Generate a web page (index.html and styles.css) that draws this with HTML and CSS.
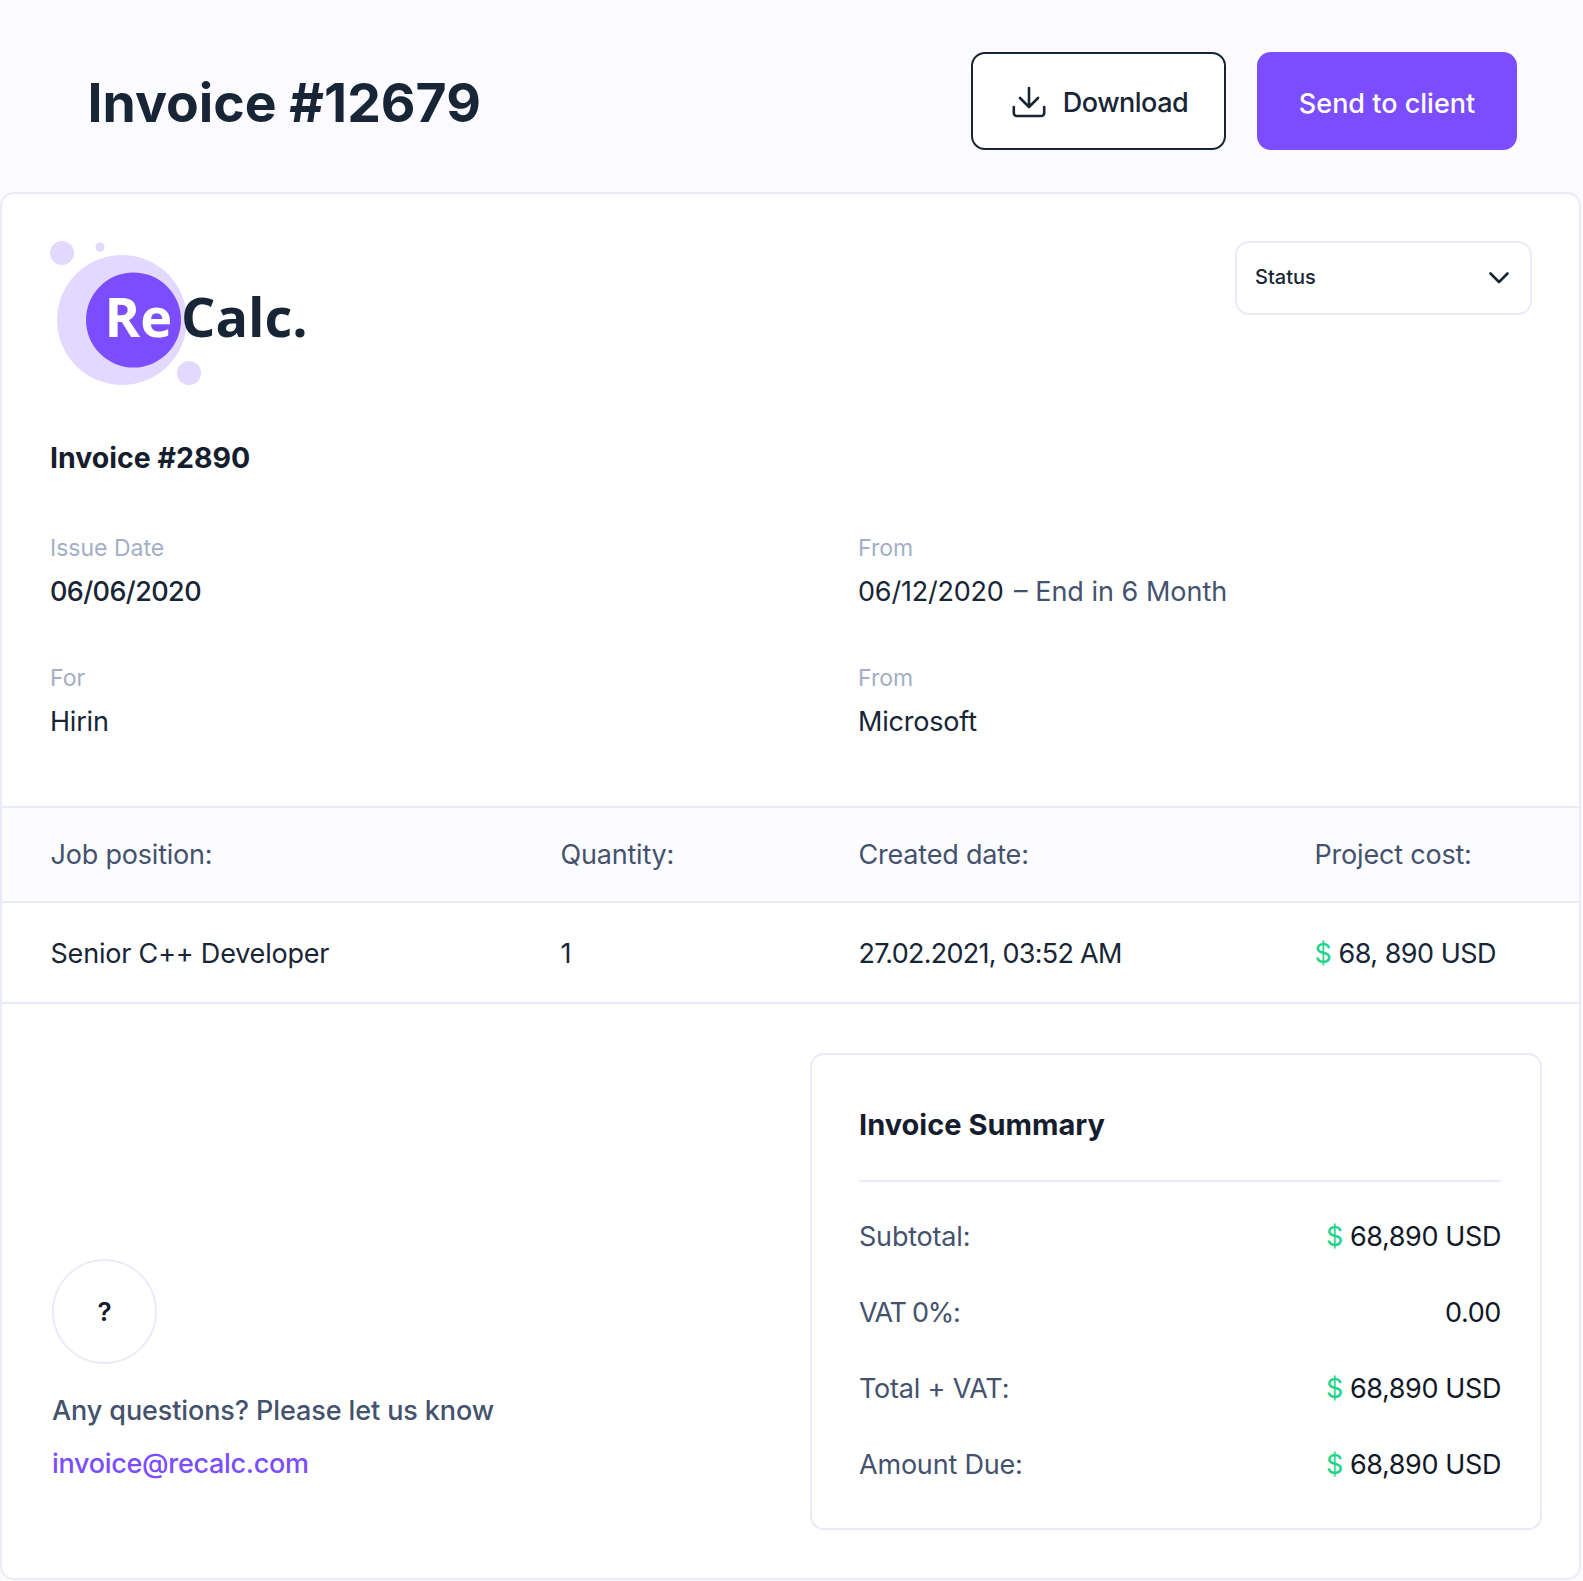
FILE: index.html
```html
<!DOCTYPE html>
<html lang="en">
<head>
    <meta charset="UTF-8">
    <title>Invoice #12679</title>
    <link rel="stylesheet" href="styles.css">
</head>
<body>

    <header class="topbar">
        <h1>Invoice #12679</h1>
        <div class="actions">
            <button class="btn btn-outline">
                <svg width="34" height="34" viewBox="0 0 34 34" fill="none" stroke="#172536" stroke-width="2.6" stroke-linecap="round" stroke-linejoin="round">
                    <path d="M17 3v19M8 13l9 9 9-9"/>
                    <path d="M1.800 22v6a3 3 0 0 0 3 3h24.400a3 3 0 0 0 3-3v-6"/>
                </svg>
                Download
            </button>
            <button class="btn btn-primary">Send to client</button>
        </div>
    </header>

    <main class="card">
        <section class="info">
            <div class="info-top">
                <svg class="logo" width="270" height="150" viewBox="50 241 270 150">
                    <circle cx="122" cy="320" r="65" fill="#e3d9ff"/>
                    <circle cx="62" cy="253" r="12" fill="#e3d9ff"/>
                    <circle cx="100" cy="247" r="4.500" fill="#e3d9ff"/>
                    <circle cx="189" cy="373" r="12" fill="#e3d9ff"/>
                    <circle cx="133.500" cy="320" r="47.500" fill="#7b4dff"/>
                    <text x="104.500" y="337" class="logo-re">Re</text>
                    <text x="181" y="337" class="logo-calc">Calc.</text>
                </svg>
                <div class="status">
                    <span>Status</span>
                    <svg width="22" height="14" viewBox="0 0 22 14" fill="none" stroke="#172536" stroke-width="2.600" stroke-linecap="round" stroke-linejoin="round">
                        <path d="M2.500 2.500L11 11l8.500-8.500"/>
                    </svg>
                </div>
            </div>

            <h2>Invoice #2890</h2>

            <div class="details">
                <div>
                    <div class="label">Issue Date</div>
                    <div class="value strong">06/06/2020</div>
                </div>
                <div>
                    <div class="label">From</div>
                    <div class="value">06/12/2020 <span class="muted">– End in 6 Month</span></div>
                </div>
                <div>
                    <div class="label">For</div>
                    <div class="value">Hirin</div>
                </div>
                <div>
                    <div class="label">From</div>
                    <div class="value">Microsoft</div>
                </div>
            </div>
        </section>

        <div class="table-row table-head">
            <div>Job position:</div>
            <div>Quantity:</div>
            <div>Created date:</div>
            <div>Project cost:</div>
        </div>
        <div class="table-row table-body">
            <div>Senior C++ Developer</div>
            <div>1</div>
            <div class="nums">27.02.2021, 03:52 AM</div>
            <div class="cost"><span class="dollar">$</span> 68, 890 USD</div>
        </div>

        <section class="bottom">
            <div class="contact">
                <div class="help-circle">?</div>
                <p class="question">Any questions? Please let us know</p>
                <a class="mail" href="#">invoice@recalc.com</a>
            </div>

            <div class="summary">
                <h3>Invoice Summary</h3>
                <div class="summary-row">
                    <span>Subtotal:</span>
                    <span class="amount"><span class="dollar">$</span> 68,890 USD</span>
                </div>
                <div class="summary-row">
                    <span class="nums">VAT 0%:</span>
                    <span class="amount">0.00</span>
                </div>
                <div class="summary-row">
                    <span>Total + VAT:</span>
                    <span class="amount"><span class="dollar">$</span> 68,890 USD</span>
                </div>
                <div class="summary-row">
                    <span>Amount Due:</span>
                    <span class="amount"><span class="dollar">$</span> 68,890 USD</span>
                </div>
            </div>
        </section>
    </main>

</body>
</html>
```

FILE: styles.css
```css
* {
    box-sizing: border-box;
}
body {
    margin: 0;
    background-color: #fafaff;
    font-family: Inter, "Noto Sans", sans-serif;
    color: #172536;
}
.topbar {
    height: 192px;
    padding: 52px 66px 42px 87.500px;
    display: flex;
    justify-content: space-between;
    align-items: center;
}
.topbar h1 {
    margin: 2px 0 0;
    font-size: 53.5px;
    font-weight: 700;
}
.actions {
    display: flex;
    gap: 31px;
}
.btn {
    height: 98px;
    border-radius: 14px;
    font-family: inherit;
    font-size: 27px;
    font-weight: 500;
    display: flex;
    align-items: center;
    justify-content: center;
}
.btn-outline {
    width: 255px;
    gap: 17px;
    padding: 2px 0 0 3px;
    letter-spacing: -0.5px;
    background: white;
    color: #172536;
    border: 2px solid #172536;
}
.btn-primary {
    width: 260px;
    padding-top: 5px;
    background: #7b4dff;
    color: white;
    border: none;
}
.card {
    margin: 0 2px 0 0;
    height: 1388px;
    background: white;
    border: 2px solid #e9ecf8;
    border-radius: 14px;
    overflow: hidden;
}
.info {
    height: 614px;
    padding: 47px 47px 0 48px;
    border-bottom: 2px solid #e9ecf8;
}
.info-top {
    display: flex;
    justify-content: space-between;
    align-items: flex-start;
}
.logo {
    display: block;
}
.logo-re {
    font-family: "Open Sans", sans-serif;
    font-size: 54px;
    font-weight: 700;
    fill: white;
}
.logo-calc {
    font-family: "Open Sans", sans-serif;
    font-size: 54px;
    font-weight: 700;
    fill: #172536;
}
.status {
    width: 297px;
    height: 74px;
    padding: 0 20px 0 18px;
    border: 2px solid #e9ecf8;
    border-radius: 14px;
    display: flex;
    justify-content: space-between;
    align-items: center;
    font-size: 20px;
    font-weight: 500;
}
.status span {
    margin-top: -2px;
}
.info h2 {
    margin: 45px 0 0;
    font-size: 28.5px;
    font-weight: 700;
    line-height: 44px;
    color: #161d2e;
}
.details {
    margin-top: 54px;
    display: grid;
    grid-template-columns: 808px 1fr;
    row-gap: 57px;
}
.label {
    font-size: 23px;
    line-height: 28px;
    color: #a3afc6;
}
.value {
    margin-top: 15px;
    font-size: 27px;
    line-height: 30px;
    letter-spacing: -0.2px;
    color: #172536;
}
.value.strong {
    font-weight: 500;
    letter-spacing: -0.6px;
}
.muted {
    margin-left: 3px;
    letter-spacing: 0;
    color: #44526e;
}
.table-row {
    display: grid;
    grid-template-columns: 510px 298px 456px 1fr;
    padding-left: 48.500px;
    align-items: center;
    font-size: 27px;
    letter-spacing: -0.2px;
}
.table-head {
    height: 95px;
    background: #fcfcff;
    color: #44526e;
    border-bottom: 2px solid #e9ecf8;
}
.table-body {
    height: 101px;
    padding-top: 2px;
    color: #172536;
    border-bottom: 2px solid #e9ecf8;
}
.table-body .nums {
    letter-spacing: -0.75px;
}
.cost {
    letter-spacing: -0.5px;
}
.dollar {
    color: #22d48a;
}
.bottom {
    display: flex;
    justify-content: space-between;
    padding: 49px 37px 0 50px;
}
.contact {
    padding-top: 206px;
}
.help-circle {
    width: 105px;
    height: 105px;
    border: 2px solid #e9ecf8;
    border-radius: 50%;
    display: flex;
    align-items: center;
    justify-content: center;
    font-size: 26px;
    font-weight: 600;
    color: #161d2e;
}
.question {
    margin: 31px 0 0;
    font-size: 27px;
    line-height: 32px;
    font-weight: 500;
    letter-spacing: -0.1px;
    color: #44526e;
}
.mail {
    display: block;
    margin-top: 21px;
    font-size: 27px;
    line-height: 32px;
    font-weight: 500;
    letter-spacing: -0.3px;
    color: #7b4dff;
    text-decoration: none;
}
.summary {
    width: 732px;
    height: 477px;
    padding: 48px 39px 0 47px;
    border: 2px solid #e9ecf8;
    border-radius: 14px;
}
.summary h3 {
    margin: 0;
    height: 79px;
    font-size: 29px;
    line-height: 44px;
    font-weight: 700;
    color: #161d2e;
    border-bottom: 2px solid #e9ecf8;
}
.summary-row {
    height: 76px;
    display: flex;
    justify-content: space-between;
    align-items: center;
    font-size: 27px;
    letter-spacing: -0.2px;
    color: #44526e;
}
.summary-row:first-of-type {
    margin-top: 16px;
}
.summary-row .nums {
    letter-spacing: -1.3px;
}
.amount {
    letter-spacing: -0.4px;
    color: #111827;
}
```
